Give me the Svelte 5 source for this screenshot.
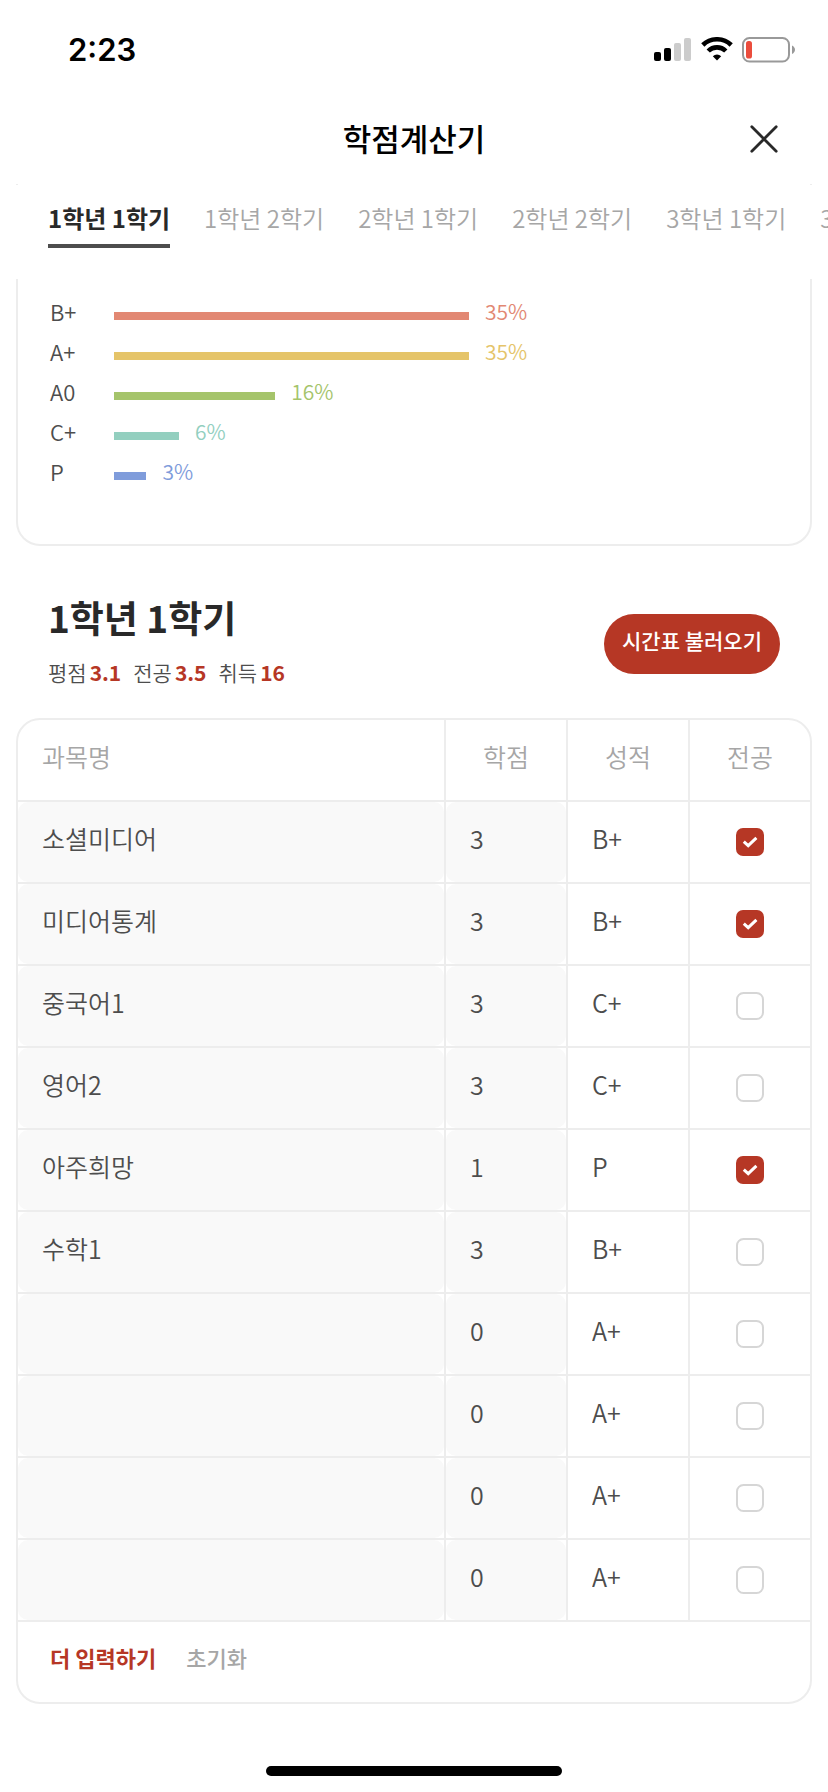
<script>
  const terms = ['1학년 1학기', '1학년 2학기', '2학년 1학기', '2학년 2학기', '3학년 1학기', '3학년 2학기'];
  let active = $state(0);

  const grades = [
    { name: 'B+', share: 35, color: '#e28873' },
    { name: 'A+', share: 35, color: '#e5c469' },
    { name: 'A0', share: 15.9, color: '#a5c46b' },
    { name: 'C+', share: 6.4, color: '#93cfbf' },
    { name: 'P', share: 3.2, color: '#7f9cdb' }
  ];
  // Share of the track that one percent fills
  const scale = 1.523;
  const percent = (share) => Math.floor(share + 0.2);

  const stats = [
    { label: '평점', value: '3.1' },
    { label: '전공', value: '3.5' },
    { label: '취득', value: '16' }
  ];

  const options = ['A+', 'A0', 'B+', 'B0', 'C+', 'C0', 'D+', 'D0', 'F', 'P'];

  const blank = () => ({ name: '', credit: '0', grade: 'A+', major: false });
  let courses = $state([
    { name: '소셜미디어', credit: '3', grade: 'B+', major: true },
    { name: '미디어통계', credit: '3', grade: 'B+', major: true },
    { name: '중국어1', credit: '3', grade: 'C+', major: false },
    { name: '영어2', credit: '3', grade: 'C+', major: false },
    { name: '아주희망', credit: '1', grade: 'P', major: true },
    { name: '수학1', credit: '3', grade: 'B+', major: false },
    blank(),
    blank(),
    blank(),
    blank()
  ]);

  const addRow = () => courses.push(blank());
  const reset = () => (courses = Array.from({ length: 10 }, blank));
</script>

<div class="page">
  <div class="status">
    <span class="time">2:23</span>
    <div class="indicators">
      <svg width="38" height="26" viewBox="0 0 38 26" aria-hidden="true">
        <rect x="0" y="15" width="7" height="9" rx="2" fill="#000" />
        <rect x="10" y="11" width="7" height="13" rx="2" fill="#000" />
        <rect x="20" y="6" width="7" height="18" rx="2" fill="#ccc" />
        <rect x="30" y="1" width="7" height="23" rx="2" fill="#ccc" />
      </svg>
      <svg width="32" height="26" viewBox="0 0 32 26" aria-hidden="true">
        <g fill="none" stroke="#000" stroke-width="4.6">
          <path d="M1.8 8 A20.5 20.5 0 0 1 30.2 8" />
          <path d="M7.2 14 A12.4 12.4 0 0 1 24.8 14" />
        </g>
        <path d="M16 23.6 L11.8 19.3 A6 6 0 0 1 20.2 19.3 Z" fill="#000" />
      </svg>
      <svg width="54" height="26" viewBox="0 0 54 26" aria-hidden="true">
        <rect x="1" y="1" width="46" height="23.5" rx="6.5" fill="none" stroke="#999" stroke-width="2" />
        <rect x="4" y="4" width="6" height="17.5" rx="2.6" fill="#eb4d3d" />
        <path d="M50 8.5 C54 10.5 54 15 50 17 Z" fill="#999" />
      </svg>
    </div>
  </div>

  <header class="nav">
    <h1>학점계산기</h1>
    <button class="close" aria-label="닫기">
      <svg width="28" height="28" viewBox="0 0 28 28" aria-hidden="true">
        <path d="M1.8 1.8 L26.2 26.2 M26.2 1.8 L1.8 26.2" fill="none" stroke="#292929" stroke-width="2.8" stroke-linecap="round" />
      </svg>
    </button>
  </header>

  <div class="seam"></div>

  <nav class="tabs">
    {#each terms as term, i}
      <button class="tab" class:active={i === active} onclick={() => (active = i)}>{term}</button>
    {/each}
  </nav>

  <section class="chart">
    {#each grades as g}
      <div class="row">
        <span class="grade">{g.name}</span>
        <div class="track">
          <span class="bar" style="width: {g.share * scale}%; background: {g.color}"></span>
          <span class="pct" style="color: {g.color}">{percent(g.share)}%</span>
        </div>
      </div>
    {/each}
  </section>

  <section class="summary">
    <div>
      <h2>{terms[active]}</h2>
      <p class="stats">
        {#each stats as s}
          <span class="stat">{s.label}<strong>{s.value}</strong></span>
        {/each}
      </p>
    </div>
    <button class="load">시간표 불러오기</button>
  </section>

  <section class="sheet">
    <table>
      <colgroup>
        <col />
        <col class="narrow" />
        <col class="narrow" />
        <col class="narrow" />
      </colgroup>
      <thead>
        <tr>
          <th class="first">과목명</th>
          <th>학점</th>
          <th>성적</th>
          <th>전공</th>
        </tr>
      </thead>
      <tbody>
        {#each courses as c}
          <tr>
            <td><input class="field" type="text" aria-label="과목명" bind:value={c.name} /></td>
            <td><input class="field" type="text" inputmode="numeric" aria-label="학점" bind:value={c.credit} /></td>
            <td>
              <select class="field plain" aria-label="성적" bind:value={c.grade}>
                {#each options as o}<option>{o}</option>{/each}
              </select>
            </td>
            <td>
              <label class="check">
                <input type="checkbox" aria-label="전공" bind:checked={c.major} />
                <svg width="28" height="28" viewBox="0 0 28 28" aria-hidden="true">
                  {#if c.major}
                    <rect width="28" height="28" rx="7" fill="#b63725" />
                    <path d="M7.8 13.6 L12.2 17.6 L20.4 9.8" fill="none" stroke="#fff" stroke-width="3" />
                  {:else}
                    <rect x="1" y="1" width="26" height="26" rx="6.5" fill="#fff" stroke="#d6d6d6" stroke-width="2" />
                  {/if}
                </svg>
              </label>
            </td>
          </tr>
        {/each}
      </tbody>
    </table>
    <div class="actions">
      <button class="more" onclick={addRow}>더 입력하기</button>
      <button class="reset" onclick={reset}>초기화</button>
    </div>
  </section>

  <div class="home"></div>
</div>

<style>
  :global(body) {
    background: #fff;
  }

  .page {
    box-sizing: border-box;
    min-height: 100vh;
    display: flex;
    flex-direction: column;
    overflow-x: hidden;
    color: #4d4d4d;
    font-family: 'Noto Sans CJK KR', 'Noto Sans', sans-serif;
    font-weight: 350;
  }

  button,
  input,
  select {
    margin: 0;
    padding: 0;
    border: 0;
    background: none;
    color: inherit;
    font: inherit;
  }

  button {
    cursor: pointer;
    white-space: nowrap;
  }

  svg {
    display: block;
  }

  .status {
    box-sizing: border-box;
    height: 88px;
    padding: 12px 32px 0 68px;
    display: flex;
    align-items: center;
    justify-content: space-between;
  }

  .time {
    padding-bottom: 2px;
    color: #000;
    font-family: Inter, sans-serif;
    font-size: 31px;
    font-weight: 600;
  }

  .indicators {
    display: flex;
    align-items: center;
    gap: 9px;
  }

  .nav {
    box-sizing: border-box;
    height: 96px;
    padding: 6px 50px 0;
    display: grid;
    grid-template-columns: 28px 1fr 28px;
    align-items: center;
  }

  h1 {
    grid-column: 2;
    margin: 0;
    padding-bottom: 2px;
    color: #000;
    font-size: 31px;
    font-weight: 500;
    line-height: 44px;
    text-align: center;
  }

  .seam {
    height: 1px;
    margin: 0 16px;
    border: solid #ededed;
    border-width: 0 2px;
  }

  .tabs {
    box-sizing: border-box;
    height: 94px;
    padding: 15px 0 0 48px;
    display: flex;
    align-items: flex-start;
    gap: 34px;
    overflow: hidden;
  }

  .tab {
    flex: none;
    padding-bottom: 8px;
    border-bottom: 4px solid transparent;
    color: #a6a6a6;
    font-size: 24px;
    line-height: 36px;
  }

  .tab.active {
    border-color: #4d4d4d;
    color: #292929;
    font-weight: 700;
  }

  .chart {
    margin: 0 16px;
    padding: 17px 30px 48px 32px;
    border: 2px solid #ededed;
    border-top: 0;
    border-radius: 0 0 24px 24px;
  }

  .row {
    height: 40px;
    display: grid;
    grid-template-columns: 64px 1fr;
    font-size: 22px;
    line-height: 30px;
  }

  .track {
    display: flex;
    align-items: flex-start;
    gap: 16px;
    font-size: 21px;
  }

  .bar {
    height: 8px;
    margin-top: 16px;
  }

  .summary {
    padding: 47px 48px 30px;
    display: flex;
    align-items: center;
    justify-content: space-between;
  }

  h2 {
    margin: 0 0 15px;
    color: #292929;
    font-size: 37px;
    font-weight: 700;
    line-height: 48px;
  }

  .stats {
    margin: 0;
    display: flex;
    gap: 12px;
    font-size: 21px;
    line-height: 32px;
  }

  .stat {
    display: flex;
    gap: 3px;
  }

  strong {
    color: #b63725;
    font-weight: 700;
  }

  .load {
    height: 60px;
    margin-top: 6px;
    padding: 0 18px 8px;
    border-radius: 30px;
    background: #b63725;
    color: #fff;
    font-size: 21px;
    font-weight: 500;
  }

  .sheet {
    margin: 0 16px;
    border: 2px solid #ededed;
    border-radius: 24px;
    overflow: hidden;
  }

  table {
    width: 100%;
    table-layout: fixed;
    border-spacing: 0;
    font-size: 25px;
  }

  .narrow {
    width: 122px;
  }

  th,
  td {
    box-sizing: border-box;
    height: 82px;
    padding: 0;
    border: solid #ededed;
    border-width: 0 0 2px 2px;
  }

  th:first-child,
  td:first-child {
    border-left: 0;
  }

  th {
    padding-bottom: 8px;
    color: #a6a6a6;
    font-weight: inherit;
  }

  .first {
    padding-left: 24px;
    text-align: left;
  }

  .field {
    box-sizing: border-box;
    display: block;
    width: 100%;
    height: 80px;
    padding: 0 24px 8px;
    border-radius: 10px;
    background: #f9f9f9;
    outline: none;
  }

  .plain {
    appearance: none;
    background: #fff;
  }

  .check {
    display: flex;
    align-items: center;
    justify-content: center;
    cursor: pointer;
  }

  .check input {
    appearance: none;
    width: 0;
    height: 0;
  }

  .actions {
    height: 80px;
    padding: 0 32px;
    display: flex;
    align-items: center;
    gap: 30px;
    font-size: 22px;
  }

  .actions button {
    padding-bottom: 10px;
    font-weight: 500;
  }

  .actions .more {
    color: #b63725;
    font-weight: 700;
  }

  .actions .reset {
    color: #a6a6a6;
  }

  .home {
    width: 296px;
    height: 10px;
    margin: auto auto 16px;
    border-radius: 5px;
    background: #000;
  }
</style>
